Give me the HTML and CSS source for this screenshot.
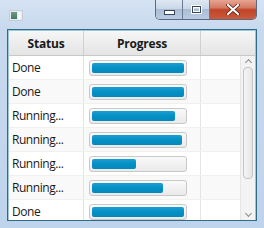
FILE: index.html
```html
<!DOCTYPE html>
<html>
<head>
<meta charset="utf-8">
<link rel="stylesheet" href="styles.css">
</head>
<body>
<div class="window">
  <div class="titlebar">
    <div class="appicon"><span class="ai-left"></span><span class="ai-right"></span></div>
    <div class="buttons">
      <div class="btn btn-min"><span class="glyph-min"></span></div>
      <div class="btn btn-max"><span class="glyph-max"></span></div>
      <div class="btn btn-close">
        <svg width="14" height="11" viewBox="0 0 14 11"><path d="M2 1 L12 10 M12 1 L2 10" stroke="#5a1a10" stroke-width="3.6" stroke-linecap="round"/><path d="M2 1 L12 10 M12 1 L2 10" stroke="#ffffff" stroke-width="2.2" stroke-linecap="round"/></svg>
      </div>
    </div>
  </div>
  <div class="content">
    <div class="table">
      <div class="header">
        <div class="hcell c1">Status</div>
        <div class="hcell c2">Progress</div>
        <div class="hcell c3"></div>
      </div>
      <div class="body">
        <div class="rows">
          <div class="row"><div class="cell c1">Done</div><div class="cell c2"><div class="track"><div class="fill" style="width:100%"></div></div></div><div class="cell c3"></div></div>
          <div class="row odd"><div class="cell c1">Done</div><div class="cell c2"><div class="track"><div class="fill" style="width:100%"></div></div></div><div class="cell c3"></div></div>
          <div class="row"><div class="cell c1">Running...</div><div class="cell c2"><div class="track"><div class="fill" style="width:90%"></div></div></div><div class="cell c3"></div></div>
          <div class="row odd"><div class="cell c1">Running...</div><div class="cell c2"><div class="track"><div class="fill" style="width:98%"></div></div></div><div class="cell c3"></div></div>
          <div class="row"><div class="cell c1">Running...</div><div class="cell c2"><div class="track"><div class="fill" style="width:48%"></div></div></div><div class="cell c3"></div></div>
          <div class="row odd"><div class="cell c1">Running...</div><div class="cell c2"><div class="track"><div class="fill" style="width:77%"></div></div></div><div class="cell c3"></div></div>
          <div class="row"><div class="cell c1">Done</div><div class="cell c2"><div class="track"><div class="fill" style="width:100%"></div></div></div><div class="cell c3"></div></div>
        </div>
        <div class="scrollbar">
          <div class="arrow up"></div>
          <div class="thumbarea"><div class="thumb"></div></div>
          <div class="arrow down"></div>
        </div>
      </div>
    </div>
  </div>
</div>
</body>
</html>
```
FILE: styles.css
```css
html, body {
  margin: 0;
  padding: 0;
}
body {
  width: 264px;
  height: 228px;
  overflow: hidden;
  font-family: "Open Sans", "Noto Sans", sans-serif;
  font-size: 12px;
  color: #1a1a1a;
}
.window {
  width: 264px;
  height: 228px;
  box-sizing: border-box;
  background: linear-gradient(#d5e3f3 0px, #c8d9ee 30px, #bed3ec 228px);
  display: flex;
  flex-direction: column;
}
.titlebar {
  height: 29px;
  display: flex;
  align-items: flex-start;
  justify-content: space-between;
  flex: none;
}
.appicon {
  margin: 10px 0 0 9px;
  width: 12px;
  height: 9px;
  display: flex;
  background: #e6eaee;
  border: 1px solid #c5cdd6;
}
.ai-left {
  width: 6px;
  height: 7px;
  margin: 1px;
  background: linear-gradient(#6f9a8a, #3f7a62);
}
.ai-right {
  flex: 1;
  margin: 1px 1px 1px 0;
  background: #f4f6f8;
}
.buttons {
  display: flex;
  margin-right: 7px;
  height: 19px;
  border: 1px solid #5a6a80;
  border-top: none;
  border-radius: 0 0 5px 5px;
  overflow: hidden;
}
.btn {
  height: 19px;
  display: flex;
  align-items: center;
  justify-content: center;
  box-sizing: border-box;
}
.btn-min {
  width: 27px;
  background: linear-gradient(#dfe8f3 0%, #c9d7e8 45%, #aabdd5 50%, #b8cbe2 100%);
  border-right: 1px solid #6b7b90;
}
.btn-max {
  width: 27px;
  background: linear-gradient(#dfe8f3 0%, #c9d7e8 45%, #aabdd5 50%, #b8cbe2 100%);
  border-right: 1px solid #6b7b90;
}
.btn-close {
  width: 46px;
  background: linear-gradient(#e8a493 0%, #d47a62 40%, #c04428 52%, #cc5a3a 100%);
}
.glyph-min {
  width: 9px;
  height: 3px;
  margin-top: 5px;
  background: #ffffff;
  border: 1px solid #3a4658;
}
.glyph-max {
  width: 7px;
  height: 5px;
  background: transparent;
  border: 1px solid #3a4658;
  box-shadow: inset 0 0 0 1px #ffffff, 0 0 0 1px #ffffff;
}
.content {
  flex: none;
  padding: 0 7px;
}
.table {
  height: 192px;
  box-sizing: border-box;
  border: 1px solid #2f6d86;
  box-shadow: inset 0 0 0 1px #9dc6d6;
  background: #ffffff;
  display: flex;
  flex-direction: column;
  overflow: hidden;
}
.header {
  display: flex;
  height: 25px;
  flex: none;
  box-sizing: border-box;
  background: linear-gradient(#f6f6f6, #e4e4e4);
  border-bottom: 1px solid #c8c8c8;
  margin: 1px 1px 0 1px;
}
.hcell {
  font-weight: bold;
  display: flex;
  align-items: center;
  justify-content: center;
  box-sizing: border-box;
  border-right: 1px solid #d0d0d0;
  letter-spacing: -0.2px;
}
.c1 { width: 75px; flex: none; }
.c2 { width: 117px; flex: none; }
.hcell.c3 { flex: 1; border-right: none; }
.body {
  flex: 1;
  display: flex;
  min-height: 0;
  margin: 0 1px 0 1px;
}
.rows {
  flex: 1;
  overflow: hidden;
}
.row {
  display: flex;
  height: 24px;
  box-sizing: border-box;
  background: #ffffff;
  border-bottom: 1px solid #f0f0f0;
}
.row.odd {
  background: #f9f9f9;
}
.cell {
  box-sizing: border-box;
  border-right: 1px solid #e4e4e4;
  display: flex;
  align-items: center;
}
.cell.c1 {
  padding-left: 3px;
  letter-spacing: -0.45px;
}
.cell.c2 {
  padding-left: 5px;
}
.cell.c3 {
  flex: 1;
  border-right: none;
}
.track {
  width: 98px;
  height: 16px;
  box-sizing: border-box;
  border: 1px solid #c8c8c8;
  border-radius: 3px;
  background: linear-gradient(#fafafa, #e9e9e9);
  padding: 2px;
}
.fill {
  height: 100%;
  border-radius: 2px;
  background: linear-gradient(#1a9fd3, #0590c4 50%, #0288bb);
}
.scrollbar {
  width: 15px;
  flex: none;
  display: flex;
  flex-direction: column;
  background: #f3f3f3;
  border-left: 1px solid #e6e6e6;
  box-sizing: border-box;
}
.arrow {
  height: 10px;
  flex: none;
  display: flex;
  align-items: center;
  justify-content: center;
}
.arrow.up::before, .arrow.down::before {
  content: "";
  width: 4px;
  height: 4px;
  border-left: 1px solid #8c8c8c;
  border-top: 1px solid #8c8c8c;
}
.arrow.up::before {
  transform: rotate(45deg);
  margin-top: 3px;
}
.arrow.down::before {
  transform: rotate(225deg);
  margin-bottom: 3px;
}
.thumbarea {
  flex: 1;
  padding: 1px 2px;
}
.thumb {
  height: 112px;
  border: 1px solid #c4c4c4;
  border-radius: 4px;
  background: linear-gradient(90deg, #f4f4f4, #e6e6e6);
  box-sizing: border-box;
}
```
